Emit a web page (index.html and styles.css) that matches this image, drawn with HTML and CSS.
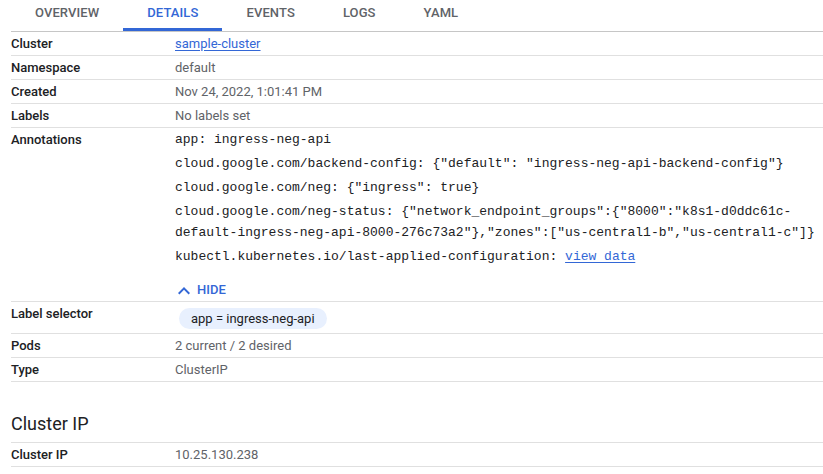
FILE: index.html
```html
<!DOCTYPE html>
<html lang="en">
<head>
<meta charset="utf-8">
<title>Service details</title>
<link rel="stylesheet" href="styles.css">
</head>
<body>
<div class="page">
  <nav class="tabs">
    <a class="tab">OVERVIEW</a>
    <a class="tab active">DETAILS</a>
    <a class="tab">EVENTS</a>
    <a class="tab">LOGS</a>
    <a class="tab">YAML</a>
  </nav>

  <div class="props">
    <div class="row"><div class="label">Cluster</div><div class="value"><a class="link" href="#">sample-cluster</a></div></div>
    <div class="row"><div class="label">Namespace</div><div class="value">default</div></div>
    <div class="row"><div class="label">Created</div><div class="value">Nov 24, 2022, 1:01:41 PM</div></div>
    <div class="row"><div class="label">Labels</div><div class="value">No labels set</div></div>
    <div class="row"><div class="label">Annotations</div>
      <div class="value">
        <div class="annotations">
          <div class="anno">app: ingress-neg-api</div>
          <div class="anno">cloud.google.com/backend-config: {"default": "ingress-neg-api-backend-config"}</div>
          <div class="anno">cloud.google.com/neg: {"ingress": true}</div>
          <div class="anno">cloud.google.com/neg-status: {"network_endpoint_groups":{"8000":"k8s1-d0ddc61c-default-ingress-neg-api-8000-276c73a2"},"zones":["us-central1-b","us-central1-c"]}</div>
          <div class="anno">kubectl.kubernetes.io/last-applied-configuration: <a class="link" href="#">view data</a></div>
        </div>
        <button class="hide-btn" type="button">
          <svg class="chev" width="14" height="9" viewBox="5 7 14 9"><path d="M12 8l-6 6 1.41 1.41L12 10.83l4.59 4.58L18 14z" fill="currentColor"/></svg>
          <span>HIDE</span>
        </button>
      </div>
    </div>
    <div class="row"><div class="label">Label selector</div><div class="value"><span class="chip">app = ingress-neg-api</span></div></div>
    <div class="row"><div class="label">Pods</div><div class="value">2 current / 2 desired</div></div>
    <div class="row"><div class="label">Type</div><div class="value">ClusterIP</div></div>
  </div>

  <h2 class="section-title">Cluster IP</h2>
  <div class="props">
    <div class="row"><div class="label">Cluster IP</div><div class="value">10.25.130.238</div></div>
  </div>
</div>
</body>
</html>
```

FILE: styles.css
```css
html, body {
  margin: 0;
  padding: 0;
  background: #ffffff;
}

body {
  font-family: Roboto, "Liberation Sans", Arial, sans-serif;
  font-size: 13px;
  color: #202124;
}

.page {
  padding-left: 11px;
}

.tabs {
  display: flex;
  height: 32px;
  box-sizing: border-box;
  border-bottom: 1px solid #c6c6c6;
}

.tab {
  display: block;
  box-sizing: border-box;
  height: 31px;
  padding: 0 24px;
  line-height: 25px;
  font-size: 13px;
  font-weight: 500;
  letter-spacing: 0.1px;
  color: #5f6368;
  border-bottom: 3px solid transparent;
  cursor: pointer;
}

.tab.active {
  color: #3367d6;
  border-bottom-color: #3367d6;
}

.row {
  display: grid;
  grid-template-columns: 164px 1fr;
  align-items: start;
  padding: 4px 0 3px;
  line-height: 16px;
  border-bottom: 1px solid #e0e0e0;
}

.label {
  font-weight: 500;
  color: #202124;
}

.value {
  color: #5f6368;
  min-width: 0;
}

.link {
  color: #3367d6;
  text-decoration: underline;
  text-underline-offset: 2px;
}

.annotations {
  margin-top: -3px;
  display: flex;
  flex-direction: column;
  gap: 3px;
}

.anno {
  font-family: "Liberation Mono", "DejaVu Sans Mono", monospace;
  font-size: 13px;
  line-height: 21px;
  color: #202124;
}

.hide-btn {
  display: flex;
  align-items: center;
  gap: 6px;
  margin-top: 15px;
  padding: 0 0 0 2px;
  border: 0;
  background: none;
  font-family: Roboto, "Liberation Sans", Arial, sans-serif;
  font-size: 13px;
  font-weight: 500;
  line-height: 16px;
  color: #3367d6;
  cursor: pointer;
}

.chev {
  display: block;
}

.chip {
  display: inline-block;
  margin: 2px 0 1px 4px;
  padding: 0 12px;
  height: 21px;
  line-height: 21px;
  border-radius: 11px;
  background: #e8f0fe;
  color: #202124;
}

.section-title {
  margin: 30px 0 0;
  padding-bottom: 6px;
  font-size: 18px;
  font-weight: 400;
  line-height: 24px;
  color: #202124;
  border-bottom: 1px solid #e0e0e0;
}
```
